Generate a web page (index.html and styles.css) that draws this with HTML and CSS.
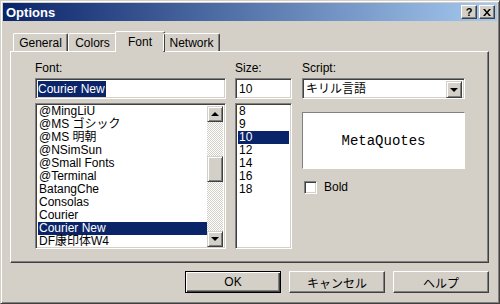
FILE: index.html
```html
<!DOCTYPE html>
<html lang="ja">
<head>
    <meta charset="UTF-8">
    <title>Options</title>
    <link rel="stylesheet" href="styles.css">
</head>
<body>
    <div class="window">
        <div class="titlebar">
            <span class="title">Options</span>
            <div class="caption-buttons">
                <span class="caption-btn">?</span>
                <span class="caption-btn close">
                    <svg width="8" height="7" viewBox="0 0 8 7"><path d="M0 0h2l2 2.5L6 0h2L5 3.5 8 7H6L4 4.5 2 7H0l3-3.5z" fill="#000"/></svg>
                </span>
            </div>
        </div>

        <div class="content">
            <div class="tabstrip">
                <div class="tab tab-general">General</div>
                <div class="tab tab-colors">Colors</div>
                <div class="tab tab-font active">Font</div>
                <div class="tab tab-network">Network</div>
            </div>

            <div class="panel">
                <div class="col col-font">
                    <div class="label">Font:</div>
                    <div class="field"><span class="sel-text">Courier New</span></div>
                    <div class="listbox font-list">
                        <div class="items">
                            <div class="item">@MingLiU</div>
                            <div class="item">@MS ゴシック</div>
                            <div class="item">@MS 明朝</div>
                            <div class="item">@NSimSun</div>
                            <div class="item">@Small Fonts</div>
                            <div class="item">@Terminal</div>
                            <div class="item">BatangChe</div>
                            <div class="item">Consolas</div>
                            <div class="item">Courier</div>
                            <div class="item selected">Courier New</div>
                            <div class="item">DF康印体W4</div>
                        </div>
                        <div class="scrollbar">
                            <div class="sb-btn"><span class="arrow up"></span></div>
                            <div class="sb-track">
                                <div class="sb-thumb"></div>
                            </div>
                            <div class="sb-btn"><span class="arrow down"></span></div>
                        </div>
                    </div>
                </div>

                <div class="col col-size">
                    <div class="label">Size:</div>
                    <div class="field">10</div>
                    <div class="listbox size-list">
                        <div class="items">
                            <div class="item">8</div>
                            <div class="item">9</div>
                            <div class="item selected">10</div>
                            <div class="item">12</div>
                            <div class="item">14</div>
                            <div class="item">16</div>
                            <div class="item">18</div>
                        </div>
                    </div>
                </div>

                <div class="col col-script">
                    <div class="label">Script:</div>
                    <div class="field combo">
                        <span class="combo-text">キリル言語</span>
                        <span class="combo-btn"><span class="arrow down"></span></span>
                    </div>
                    <div class="preview">MetaQuotes</div>
                    <div class="check-row">
                        <span class="checkbox"></span>
                        <span class="check-label">Bold</span>
                    </div>
                </div>
            </div>
        </div>

        <div class="buttons">
            <div class="btn default">OK</div>
            <div class="btn">キャンセル</div>
            <div class="btn">ヘルプ</div>
        </div>
    </div>
</body>
</html>
```

FILE: styles.css
```css
body {
    margin: 0;
    font-family: "Liberation Sans", "Noto Sans CJK JP", sans-serif;
    font-size: 12px;
    color: #000;
}
.window {
    width: 500px;
    height: 304px;
    box-sizing: border-box;
    background-color: #d4d0c8;
    border: 1px solid;
    border-color: #d4d0c8 #404040 #404040 #d4d0c8;
    box-shadow: inset 1px 1px #fff, inset -1px -1px #808080;
    padding: 2px;
}
.titlebar {
    height: 18px;
    display: flex;
    align-items: center;
    justify-content: space-between;
    background: linear-gradient(to right, #0a246a, #a6caf0);
    padding-left: 3px;
}
.title {
    color: #fff;
    font-weight: bold;
    font-size: 13px;
}
.caption-buttons {
    display: flex;
    gap: 2px;
    margin-right: 2px;
}
.caption-btn {
    width: 16px;
    height: 14px;
    box-sizing: border-box;
    background-color: #d4d0c8;
    border: 1px solid;
    border-color: #fff #404040 #404040 #fff;
    box-shadow: inset -1px -1px #808080;
    display: flex;
    align-items: center;
    justify-content: center;
    font-weight: bold;
    font-size: 11px;
    line-height: 1;
}
.content {
    padding: 10px 8px 0 7px;
}
.tabstrip {
    display: flex;
    align-items: flex-end;
    height: 20px;
    padding-left: 3px;
    position: relative;
    z-index: 1;
}
.tab {
    height: 18px;
    box-sizing: border-box;
    border-top: 1px solid #fff;
    border-left: 1px solid #fff;
    border-right: 1px solid #404040;
    box-shadow: inset -1px 0 #808080;
    border-radius: 2px 2px 0 0;
    display: flex;
    align-items: center;
    justify-content: center;
    padding-top: 1px;
}
.tab-general { width: 55px; }
.tab-colors { width: 49px; }
.tab-font { width: 46px; }
.tab-network { width: 57px; }
.tab.active {
    height: 21px;
    width: 50px;
    margin: 0 -2px -1px;
    background-color: #d4d0c8;
    padding-bottom: 2px;
}
.panel {
    height: 212px;
    box-sizing: border-box;
    border: 1px solid;
    border-color: #fff #404040 #404040 #fff;
    box-shadow: inset -1px -1px #808080;
    display: flex;
    padding: 9px 0 0 24px;
}
.col {
    display: flex;
    flex-direction: column;
}
.col-font { width: 191px; }
.col-size { width: 57px; margin-left: 9px; }
.col-script { width: 163px; margin-left: 10px; }
.label {
    height: 17px;
    line-height: 14px;
}
.field {
    height: 21px;
    box-sizing: border-box;
    background-color: #fff;
    border: 1px solid;
    border-color: #808080 #fff #fff #808080;
    box-shadow: inset 1px 1px #404040, inset -1px -1px #d4d0c8;
    padding: 2px 2px 0 3px;
    line-height: 16px;
    display: flex;
    align-items: flex-start;
}
.sel-text {
    background-color: #0a246a;
    color: #fff;
    padding: 0 1px 0 0;
    margin-left: -1px;
}
.listbox {
    margin-top: 4px;
    height: 146px;
    box-sizing: border-box;
    background-color: #fff;
    border: 1px solid;
    border-color: #808080 #fff #fff #808080;
    box-shadow: inset 1px 1px #404040, inset -1px -1px #d4d0c8;
    padding: 1px 2px 0 2px;
    display: flex;
    overflow: hidden;
}
.items {
    flex: 1;
    overflow: hidden;
}
.item {
    height: 13px;
    line-height: 12px;
    padding-left: 1px;
    white-space: nowrap;
}
.item.selected {
    background-color: #0a246a;
    color: #fff;
}
.scrollbar {
    width: 16px;
    display: flex;
    flex-direction: column;
    margin: 1px 0 1px;
}
.sb-btn, .sb-thumb, .combo-btn {
    box-sizing: border-box;
    background-color: #d4d0c8;
    border: 1px solid;
    border-color: #d4d0c8 #404040 #404040 #d4d0c8;
    box-shadow: inset 1px 1px #fff, inset -1px -1px #808080;
}
.sb-btn {
    height: 16px;
    display: flex;
    align-items: center;
    justify-content: center;
}
.sb-track {
    flex: 1;
    background-color: #fff;
    background-image: repeating-conic-gradient(#d4d0c8 0 25%, #fff 0 50%);
    background-size: 2px 2px;
    padding-top: 34px;
}
.sb-thumb {
    height: 26px;
}
.arrow {
    width: 0;
    height: 0;
    border-left: 4px solid transparent;
    border-right: 4px solid transparent;
}
.arrow.up { border-bottom: 4px solid #000; }
.arrow.down { border-top: 4px solid #000; }
.combo {
    justify-content: space-between;
    padding: 2px 2px 2px 3px;
}
.combo-btn {
    width: 16px;
    height: 17px;
    display: flex;
    align-items: center;
    justify-content: center;
}
.preview {
    margin-top: 13px;
    height: 57px;
    box-sizing: border-box;
    background-color: #fff;
    border: 1px solid;
    border-color: #808080 #fff #fff #808080;
    display: flex;
    align-items: center;
    justify-content: center;
    font-family: "Liberation Mono", monospace;
    font-size: 14px;
}
.check-row {
    margin-top: 11px;
    display: flex;
    align-items: center;
    padding-left: 2px;
}
.checkbox {
    width: 13px;
    height: 13px;
    box-sizing: border-box;
    background-color: #fff;
    border: 1px solid;
    border-color: #808080 #fff #fff #808080;
    box-shadow: inset 1px 1px #404040, inset -1px -1px #d4d0c8;
}
.check-label {
    margin-left: 7px;
}
.buttons {
    display: flex;
    justify-content: flex-end;
    gap: 8px;
    margin-top: 8px;
    padding-right: 8px;
}
.btn {
    width: 96px;
    height: 22px;
    box-sizing: border-box;
    border: 1px solid;
    border-color: #fff #404040 #404040 #fff;
    box-shadow: inset -1px -1px #808080;
    display: flex;
    align-items: center;
    justify-content: center;
}
.btn.default {
    border: 1px solid #000;
    box-shadow: inset 1px 1px #fff, inset -1px -1px #404040, inset -2px -2px #808080;
}
```
